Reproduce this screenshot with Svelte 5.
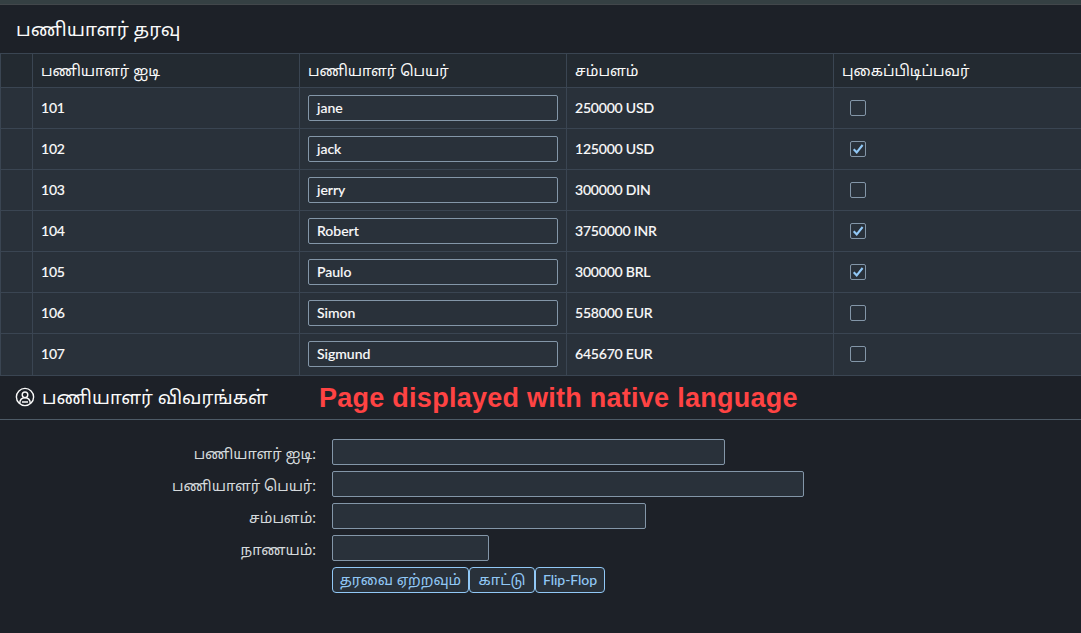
<script>
  const rows = [
    { id: 101, name: 'jane', salary: '250000 USD', smoker: false },
    { id: 102, name: 'jack', salary: '125000 USD', smoker: true },
    { id: 103, name: 'jerry', salary: '300000 DIN', smoker: false },
    { id: 104, name: 'Robert', salary: '3750000 INR', smoker: true },
    { id: 105, name: 'Paulo', salary: '300000 BRL', smoker: true },
    { id: 106, name: 'Simon', salary: '558000 EUR', smoker: false },
    { id: 107, name: 'Sigmund', salary: '645670 EUR', smoker: false }
  ];
  const fields = [
    { label: 'பணியாளர் ஐடி:', width: 393 },
    { label: 'பணியாளர் பெயர்:', width: 472 },
    { label: 'சம்பளம்:', width: 314 },
    { label: 'நாணயம்:', width: 157 }
  ];
</script>

<main>
  <div class="shell"></div>
  <h1>பணியாளர் தரவு</h1>
  <section class="table">
    <div class="row head">
      <div></div>
      <div>பணியாளர் ஐடி</div>
      <div>பணியாளர் பெயர்</div>
      <div>சம்பளம்</div>
      <div>புகைப்பிடிப்பவர்</div>
    </div>
    {#each rows as r}
      <div class="row">
        <div></div>
        <div class="text">{r.id}</div>
        <div><span class="input">{r.name}</span></div>
        <div class="text">{r.salary}</div>
        <div>
          <span class="check">
            {#if r.smoker}
              <svg width="14" height="14" viewBox="0 0 14 14"><path d="M2.7 7.2 5.7 10.3 11.6 3" fill="none" stroke="#91c8f6" stroke-width="2.1" /></svg>
            {/if}
          </span>
        </div>
      </div>
    {/each}
  </section>
  <header>
    <svg class="person" width="20" height="20" viewBox="0 0 20 20" fill="none" stroke="#fafafa" stroke-width="1.4">
      <circle cx="10" cy="9" r="8.6" />
      <circle cx="10" cy="6.8" r="2.8" />
      <path d="M4.7 15.4C4.9 11.8 7.2 9.8 10 9.8s5.1 2 5.3 5.6M7 14h6" />
    </svg>
    <h2>பணியாளர் விவரங்கள்</h2>
    <strong>Page displayed with native language</strong>
  </header>
  <form>
    {#each fields as f}
      <div class="field">
        <span class="label">{f.label}</span>
        <input aria-label={f.label} style="width:{f.width}px" />
      </div>
    {/each}
    <div class="buttons">
      <button type="button" class="load">தரவை ஏற்றவும்</button>
      <button type="button" class="show">காட்டு</button>
      <button type="button" class="flip">Flip-Flop</button>
    </div>
  </form>
</main>

<style>
  :global(body) { margin: 0; background: #1d2128; }
  main {
    width: 1081px;
    height: 633px;
    overflow: hidden;
    background: #1d2128;
    color: #fafafa;
    font: 500 14px Lato, 'Noto Sans Tamil', sans-serif;
    letter-spacing: -0.2px;
  }
  main * { box-sizing: border-box; }
  .shell { height: 5px; background: #354043; border-bottom: 1px solid #42474b; }
  h1, h2 { margin: 0; font-weight: 400; font-size: 18.9px; letter-spacing: 0; white-space: nowrap; }
  h1 { height: 48px; line-height: 48px; padding-left: 16px; }
  .table { border-top: 1px solid #3a4552; border-left: 1px solid #3a4552; }
  .row {
    display: grid;
    grid-template-columns: 32px 267px 267px 267px 1fr;
    height: 41px;
    background: #29313a;
    border-bottom: 1px solid #3a4552;
  }
  .row > div { display: flex; align-items: center; padding: 0 8px; border-right: 1px solid #3a4552; white-space: nowrap; }
  .row > div.text { padding-bottom: 2px; }
  .text, .input { -webkit-text-stroke: 0.12px #fafafa; }
  .row > div:last-child { border-right: 0; }
  .row:last-child { height: 42px; }
  .row:last-child > div { padding-bottom: 1px; }
  .row:last-child > div.text { padding-bottom: 3px; }
  .row.head { height: 34px; background: #232a31; font-weight: 400; font-size: 14.8px; letter-spacing: 0; }
  .row.head > div { padding-top: 1px; }
  .input { display: flex; align-items: center; width: 250px; height: 26px; padding: 0 8px 2px; border: 1px solid #8396a8; border-radius: 2px; letter-spacing: 0; }
  .check { width: 16px; height: 16px; margin-left: 8px; border: 1px solid #8396a8; border-radius: 2px; }
  .check svg { display: block; }
  header { display: flex; align-items: center; height: 44px; padding-left: 15px; border-bottom: 1px solid #4d5a66; }
  .person { overflow: visible; }
  h2 { width: 277px; margin-left: 7px; padding-top: 2px; font-size: 18.6px; }
  strong { padding-top: 1px; font: 700 27px 'Liberation Sans', Arial, sans-serif; letter-spacing: 0.26px; color: #ff4343; white-space: nowrap; }
  form { display: grid; gap: 6px; padding-top: 19px; }
  .field { display: flex; align-items: center; gap: 16px; height: 26px; }
  .label { width: 316px; padding-top: 3px; text-align: right; color: #d5dadc; font-weight: 400; font-size: 14.75px; letter-spacing: 0; white-space: nowrap; }
  input { height: 26px; padding: 0 8px; border: 1px solid #8396a8; border-radius: 2px; background: #29313a; }
  .buttons { display: flex; padding-left: 332px; }
  button {
    height: 26px;
    padding: 0;
    border: 1px solid #91c8f6;
    border-radius: 4px;
    background: #29313a;
    color: #91c8f6;
    font: 400 14.75px Lato, 'Noto Sans Tamil', sans-serif;
    white-space: nowrap;
  }
  .load { width: 137px; font-size: 14.6px; }
  .show { width: 66px; }
  .flip { width: 70px; padding-bottom: 2px; font-weight: 500; font-size: 14px; letter-spacing: -0.05px; }
</style>
